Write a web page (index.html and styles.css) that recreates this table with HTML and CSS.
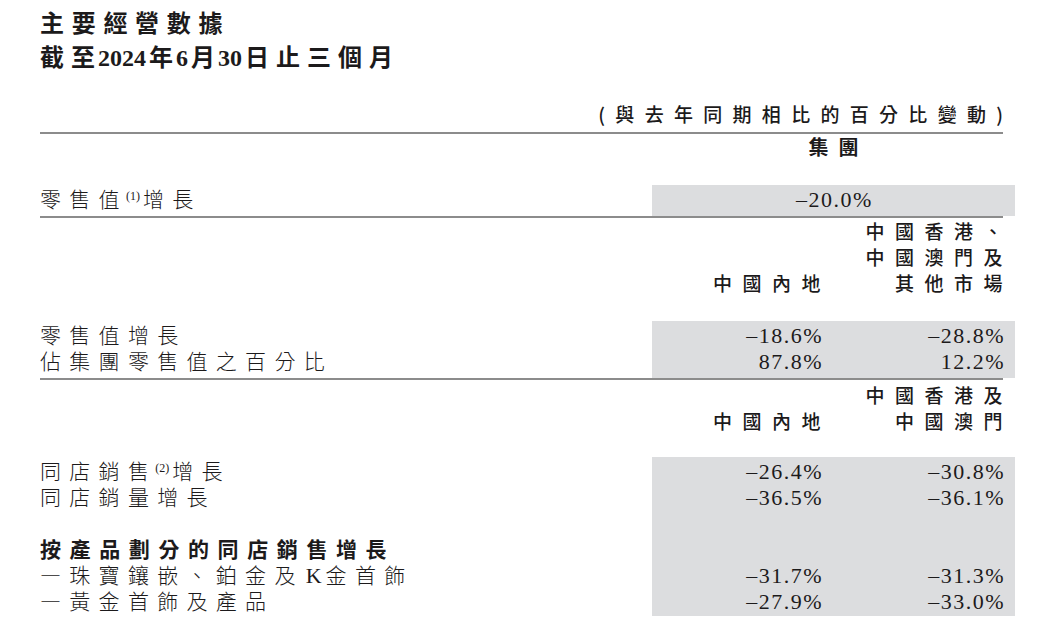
FILE: index.html
```html
<!DOCTYPE html>
<html lang="zh-Hant">
<head>
<meta charset="utf-8">
<title>主要經營數據</title>
<link rel="stylesheet" href="styles.css">
</head>
<body>
<div class="page">
  <div class="title">主要經營數據</div>
  <div class="title"><span class="tls">截</span>至<span class="d">2024</span>年<span class="d">6</span>月<span class="d">30</span><span class="tls">日止三個</span>月</div>

  <div class="note">(與去年同期相比的百分比變動<span class="last">)</span></div>
  <div class="rule"></div>

  <div class="sec">
    <div class="labels"></div>
    <div class="grp">集團</div>
  </div>

  <div class="sec s1">
    <div class="labels">
      <div class="row">零售值<span class="sup">(1)</span>增長</div>
    </div>
    <div class="vals one">
      <div class="v"><span class="num">–20.0%</span></div>
    </div>
  </div>
  <div class="rule"></div>

  <div class="sec hs">
    <div class="labels"></div>
    <div class="hdrs">
      <div class="h">中國內地</div>
      <div class="h">中國香港、<br>中國澳門及<br>其他市場</div>
    </div>
  </div>

  <div class="sec s2">
    <div class="labels">
      <div class="row">零售值增長</div>
      <div class="row">佔集團零售值之百分比</div>
    </div>
    <div class="vals">
      <div class="v"><span class="num">–18.6%</span></div>
      <div class="v"><span class="num">–28.8%</span></div>
      <div class="v"><span class="num">87.8%</span></div>
      <div class="v"><span class="num">12.2%</span></div>
    </div>
  </div>
  <div class="rule"></div>

  <div class="sec hs h2">
    <div class="labels"></div>
    <div class="hdrs">
      <div class="h">中國內地</div>
      <div class="h">中國香港及<br>中國澳門</div>
    </div>
  </div>

  <div class="sec s3">
    <div class="labels">
      <div class="row">同店銷售<span class="sup">(2)</span>增長</div>
      <div class="row">同店銷量增長</div>
      <div class="row"></div>
      <div class="row bold">按產品劃分的同店銷售增長</div>
      <div class="row">—珠寶鑲嵌、鉑金及<span class="k">K</span>金首飾</div>
      <div class="row">—黃金首飾及產品</div>
    </div>
    <div class="vals last">
      <div class="v"><span class="num">–26.4%</span></div>
      <div class="v"><span class="num">–30.8%</span></div>
      <div class="v"><span class="num">–36.5%</span></div>
      <div class="v"><span class="num">–36.1%</span></div>
      <div class="v"></div>
      <div class="v"></div>
      <div class="v"></div>
      <div class="v"></div>
      <div class="v"><span class="num">–31.7%</span></div>
      <div class="v"><span class="num">–31.3%</span></div>
      <div class="v"><span class="num">–27.9%</span></div>
      <div class="v"><span class="num">–33.0%</span></div>
    </div>
  </div>
</div>
</body>
</html>
```

FILE: styles.css
```css
html, body {
  margin: 0;
  padding: 0;
  background: #ffffff;
}

body {
  color: #1c1a1b;
  font-family: "Noto Sans CJK TC", "Noto Sans CJK SC", sans-serif;
}

.page {
  padding: 5px 0 0 40px;
  width: 975px;
}

.title {
  font-size: 24px;
  line-height: 34px;
  font-weight: 700;
  letter-spacing: 7.7px;
  white-space: nowrap;
}

.title + .title {
  letter-spacing: 0;
}

.tls {
  letter-spacing: 7px;
}

.d {
  font-family: "Liberation Serif", serif;
  font-weight: 700;
  letter-spacing: 0;
  margin: 0 3px;
  line-height: 1;
}

.note {
  width: 963px;
  margin-top: 28px;
  text-align: right;
  font-size: 19px;
  line-height: 26px;
  font-weight: 500;
  letter-spacing: 10.3px;
}

.note .last {
  letter-spacing: 0;
}

.rule {
  width: 963px;
  height: 2px;
  background: #8c8c8c;
}

.note + .rule {
  margin-top: 5px;
}

.sec {
  display: flex;
  align-items: flex-start;
}

.sec.hs {
  align-items: flex-end;
}

.labels {
  width: 612px;
  flex: none;
  font-size: 21px;
  line-height: 26px;
  font-weight: 300;
  letter-spacing: 8.3px;
  white-space: nowrap;
}

.row {
  height: 26px;
}

.row.bold {
  font-weight: 700;
  letter-spacing: 8.6px;
}

.sup {
  font-family: "Liberation Serif", serif;
  font-size: 12px;
  line-height: 1;
  letter-spacing: 0;
  vertical-align: 7px;
  margin: 0 3px 0 -2px;
}

.k {
  font-family: "Liberation Serif", serif;
  font-size: 22px;
  font-weight: 400;
  line-height: 1;
  letter-spacing: 0;
  margin: 0 4px 0 2px;
}

.grp {
  width: 363px;
  text-align: center;
  font-size: 20px;
  line-height: 25px;
  font-weight: 700;
  letter-spacing: 10px;
  padding-left: 10px;
  box-sizing: border-box;
}

.s1 {
  margin-top: 26px;
}

.vals {
  width: 363px;
  flex: none;
  display: grid;
  grid-template-columns: 181px 182px;
  background: #dcdddf;
  padding-bottom: 5px;
  font-size: 21px;
  line-height: 26px;
}

.vals.one {
  grid-template-columns: 1fr;
}

.vals.one .v {
  text-align: center;
  padding-right: 0;
  padding-left: 2px;
}

.vals.last {
  padding-bottom: 3px;
}

.v {
  height: 26px;
  text-align: right;
  padding-right: 10px;
}

.num {
  font-family: "Liberation Serif", serif;
  font-size: 22px;
  line-height: 1;
  letter-spacing: 1.5px;
}

.hdrs {
  width: 363px;
  flex: none;
  display: grid;
  grid-template-columns: 181px 182px;
  align-items: end;
  font-size: 19px;
  line-height: 26px;
  font-weight: 500;
  letter-spacing: 10.5px;
}

.h {
  text-align: right;
  padding-right: 2px;
  white-space: nowrap;
}

.s2 {
  margin-top: 25px;
}

.h2 {
  padding-top: 2px;
}

.s3 {
  margin-top: 23px;
}
```
